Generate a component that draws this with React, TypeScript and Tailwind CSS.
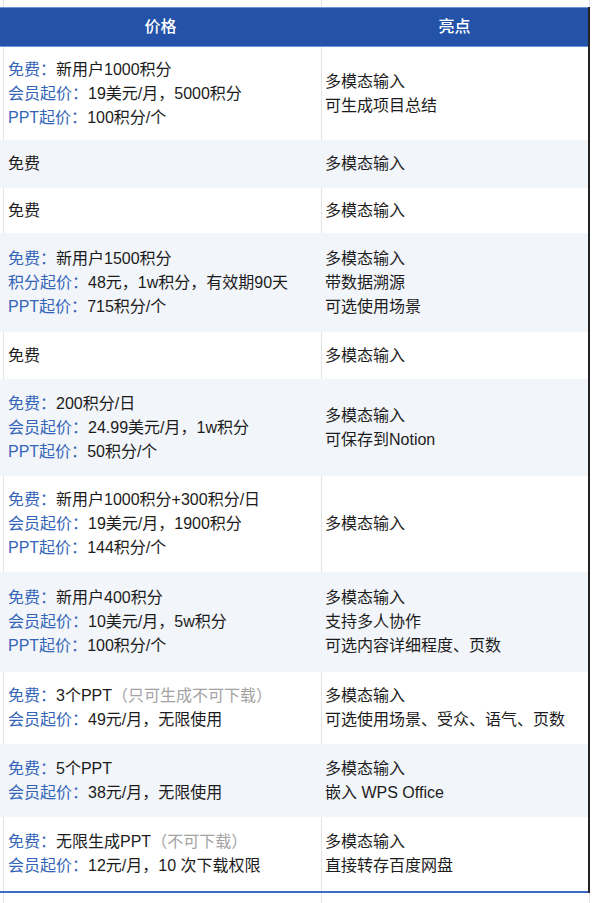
type Line = { label?: string; text: string; note?: string };
type Row = { h: number; left: Line[]; right: string[] };

const rows: Row[] = [
  {
    h: 93,
    left: [
      { label: '免费：', text: '新用户1000积分' },
      { label: '会员起价：', text: '19美元/月，5000积分' },
      { label: 'PPT起价：', text: '100积分/个' },
    ],
    right: ['多模态输入', '可生成项目总结'],
  },
  { h: 48, left: [{ text: '免费' }], right: ['多模态输入'] },
  { h: 45, left: [{ text: '免费' }], right: ['多模态输入'] },
  {
    h: 99,
    left: [
      { label: '免费：', text: '新用户1500积分' },
      { label: '积分起价：', text: '48元，1w积分，有效期90天' },
      { label: 'PPT起价：', text: '715积分/个' },
    ],
    right: ['多模态输入', '带数据溯源', '可选使用场景'],
  },
  { h: 47, left: [{ text: '免费' }], right: ['多模态输入'] },
  {
    h: 97,
    left: [
      { label: '免费：', text: '200积分/日' },
      { label: '会员起价：', text: '24.99美元/月，1w积分' },
      { label: 'PPT起价：', text: '50积分/个' },
    ],
    right: ['多模态输入', '可保存到Notion'],
  },
  {
    h: 96,
    left: [
      { label: '免费：', text: '新用户1000积分+300积分/日' },
      { label: '会员起价：', text: '19美元/月，1900积分' },
      { label: 'PPT起价：', text: '144积分/个' },
    ],
    right: ['多模态输入'],
  },
  {
    h: 100,
    left: [
      { label: '免费：', text: '新用户400积分' },
      { label: '会员起价：', text: '10美元/月，5w积分' },
      { label: 'PPT起价：', text: '100积分/个' },
    ],
    right: ['多模态输入', '支持多人协作', '可选内容详细程度、页数'],
  },
  {
    h: 72,
    left: [
      { label: '免费：', text: '3个PPT', note: '（只可生成不可下载）' },
      { label: '会员起价：', text: '49元/月，无限使用' },
    ],
    right: ['多模态输入', '可选使用场景、受众、语气、页数'],
  },
  {
    h: 73,
    left: [
      { label: '免费：', text: '5个PPT' },
      { label: '会员起价：', text: '38元/月，无限使用' },
    ],
    right: ['多模态输入', '嵌入 WPS Office'],
  },
  {
    h: 74,
    left: [
      { label: '免费：', text: '无限生成PPT', note: '（不可下载）' },
      { label: '会员起价：', text: '12元/月，10 次下载权限' },
    ],
    right: ['多模态输入', '直接转存百度网盘'],
  },
];

function Strip({ className }: { className: string }) {
  return (
    <div className={`flex ${className}`}>
      <div className="w-[3px]" />
      <div className="w-[318px] border-l border-[#e4e4e4]" />
      <div className="w-[269px] border-l border-[#e4e4e4] border-r border-r-[#e4e4e4]" />
    </div>
  );
}

export default function App() {
  return (
    <div className="w-[598px] h-[903px] bg-white flex flex-col overflow-hidden text-[16px] leading-[24px] text-[#1c1c1c] font-['Liberation_Sans','Noto_Sans_CJK_SC',sans-serif]">
      <Strip className="h-[7px]" />

      <div className="w-[590px] border-r-2 border-[#232323]">
        <div className="h-[40px] flex bg-[#2352a8] border-t border-b border-[#6f95d8] text-white font-medium">
          <div className="w-[321px] flex items-center justify-center">价格</div>
          <div className="w-[267px] flex items-center justify-center">亮点</div>
        </div>

        {rows.map((row, i) => {
          const shaded = i % 2 === 1;
          return (
            <div
              key={i}
              style={{ height: row.h }}
              className={`flex ${shaded ? 'bg-[#f2f5f9]' : 'bg-white'}`}
            >
              <div className="w-[3px]" />
              <div
                className={`w-[318px] border-l flex flex-col justify-center pl-[4px] ${
                  shaded ? 'border-transparent' : 'border-[#e4e4e4]'
                }`}
              >
                {row.left.map((l, j) => (
                  <div key={j} className="whitespace-nowrap">
                    {l.label && <span className="text-[#3465b8]">{l.label}</span>}
                    <span>{l.text}</span>
                    {l.note && <span className="text-[#a3a3a3]">{l.note}</span>}
                  </div>
                ))}
              </div>
              <div
                className={`w-[267px] border-l flex flex-col justify-center pl-[3px] ${
                  shaded ? 'border-transparent' : 'border-[#e4e4e4]'
                }`}
              >
                {row.right.map((r, j) => (
                  <div key={j} className="whitespace-nowrap">
                    {r}
                  </div>
                ))}
              </div>
            </div>
          );
        })}

        <div className="h-[2px] bg-[#3b6bc2]" />
      </div>

      <Strip className="flex-1" />
    </div>
  );
}
